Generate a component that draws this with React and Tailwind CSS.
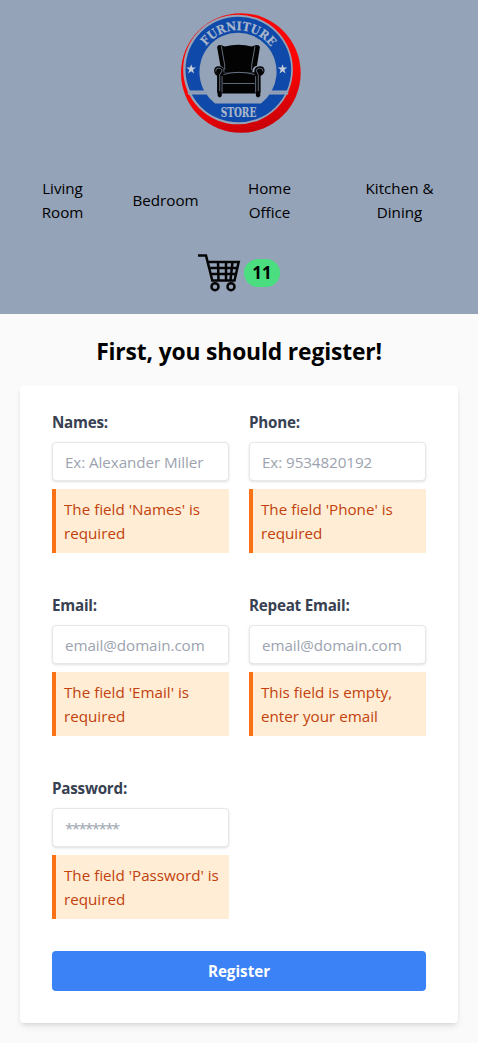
import React from 'react';

function Logo() {
  return (
    <svg className="h-[120px] w-[120px] shrink-0" viewBox="33 25 360 361" aria-label="Furniture Store">
      <defs>
        <path id="arc" d="M 82 199 A 122 122 0 0 1 326 199" />
        <linearGradient id="rim" x1="0.3" y1="0" x2="0.6" y2="1">
          <stop offset="0.6" stopColor="#fb0505" />
          <stop offset="1" stopColor="#c90008" />
        </linearGradient>
      </defs>
      <circle cx="212.5" cy="205.5" r="180" fill="url(#rim)" />
      <circle cx="204" cy="195" r="165" fill="#94a3b8" />
      <circle cx="205" cy="195" r="159" fill="#0f49a9" />
      <path d="M135 297 A116 118 0 1 1 273 297 Z" fill="#94a3b8" />
      <path d="M53 258H110L116 270H53ZM355 258H298L292 270H355Z" fill="#94a3b8" />
      <path d="M53 264H112M355 264H296" stroke="#8a94b0" strokeWidth="2" />
      <g fill="#aab7cb" stroke="#aab7cb" strokeWidth="0.6" fontFamily="'DejaVu Serif', serif" fontWeight="700">
        <text fontSize="36">
          <textPath href="#arc" startOffset="80" textLength="226" lengthAdjust="spacingAndGlyphs">FURNITURE</textPath>
        </text>
        <text x="152" y="337" fontSize="37" textLength="107" lengthAdjust="spacingAndGlyphs">STORE</text>
      </g>
      <path d="M63 179l3.500 10h11l-9 7 3.500 11-9-6.500-9 6.500 3.500-11-9-7h11zM338 179l3.500 10h11l-9 7 3.500 11-9-6.500-9 6.500 3.500-11-9-7h11z" fill="#c3cddb" />
      <g fill="#030303">
        <path d="M141 127Q144 119 154 122L164 126Q205 115 246 126L256 122Q267 119 270 127L261 184Q248 186 247 203H163Q162 188 151 184Z" />
        <path d="M132 198Q133 184 147 185Q162 187 161 202L156 216V264H141V214Q133 210 132 198ZM284 198Q283 184 269 185Q252 187 253 202L257 216V264H272V214Q283 210 284 198Z" />
        <path d="M155 203H258V267H155ZM142 263H155V275Q149 283 143 275ZM258 263H271V275Q264 283 258 275Z" />
      </g>
      <g fill="none" stroke="#8592aa" strokeWidth="2.200">
        <path d="M154 125L164 182V196M255 125L245 182V196M159 237H254M160 210Q206 197 254 210" />
        <path d="M137 201Q136 190 146 191Q157 192 155 201L149 211V260M279 201Q280 190 270 191Q258 192 260 201L265 211V260M156 215V264M257 215V264" />
      </g>
    </svg>
  );
}

function CartIcon() {
  return (
    <svg className="h-[38px] w-[43px]" viewBox="0 0 43 38" fill="none" stroke="#050505" strokeWidth="2.5" aria-hidden="true">
      <path d="M0 1.500H8L14.300 26.500H36.500L40.700 8H9.500M10.500 14H40M12 20H38M20 8L20.500 26M28 8V26M34.500 8L32.500 26" />
      <circle cx="17" cy="32.700" r="3.500" />
      <circle cx="33" cy="32.700" r="3.500" />
    </svg>
  );
}

function Field({ label, placeholder, error, type = 'text' }) {
  return (
    <div>
      <label className="block leading-6 font-bold tracking-[-0.015em] text-[#374151]">
        {label}
        <input
          type={type}
          placeholder={placeholder}
          className={
            'mt-2 block h-[39px] w-full rounded border border-gray-200 bg-white px-3 font-normal shadow placeholder:text-[#9ca3af] ' +
            (type === 'password' ? 'tracking-[-0.11em]' : 'tracking-[-0.005em]')
          }
        />
      </label>
      <p className="mt-2 border-l-4 border-[#f97316] bg-[#ffedd5] p-2 leading-6 text-[#c2410c]">{error}</p>
    </div>
  );
}

export default function App() {
  return (
    <div className="min-h-[1043px] bg-[#fafafa] font-['Open_Sans',sans-serif] text-[15.2px] text-black">
      <header className="flex h-[314px] flex-col items-center bg-[#94a3b8] pt-[13px]">
        <div className="flex w-full justify-center pl-1">
          <Logo />
        </div>
        <nav className="mt-[43px] grid w-full grid-cols-[125px_81px_127px_133px] text-center leading-6">
          <a className="px-8">Living Room</a>
          <a className="self-center">Bedroom</a>
          <a className="px-8">Home Office</a>
          <a className="px-6">Kitchen &amp; Dining</a>
        </nav>
        <div className="mt-[30px] flex items-center gap-[3px]">
          <CartIcon />
          <span className="rounded-full bg-[#4ade80] px-2 text-[17px] leading-7 font-bold">11</span>
        </div>
      </header>
      <main className="px-5 pt-[22px]">
        <h1 className="text-center text-[22.8px] leading-8 font-bold tracking-[-0.006em]">First, you should register!</h1>
        <form className="mt-[18px] rounded bg-white px-8 pt-6 pb-8 shadow-md">
          <div className="grid grid-cols-2 gap-x-5 gap-y-10">
            <Field label="Names:" placeholder="Ex: Alexander Miller" error="The field 'Names' is required" />
            <Field label="Phone:" placeholder="Ex: 9534820192" error="The field 'Phone' is required" />
            <Field label="Email:" placeholder="email@domain.com" error="The field 'Email' is required" />
            <Field label="Repeat Email:" placeholder="email@domain.com" error="This field is empty, enter your email" />
            <Field label="Password:" placeholder="********" error="The field 'Password' is required" type="password" />
          </div>
          <button type="button" className="mt-8 block h-10 w-full rounded bg-[#3b82f6] font-bold text-white">Register</button>
        </form>
      </main>
    </div>
  );
}
